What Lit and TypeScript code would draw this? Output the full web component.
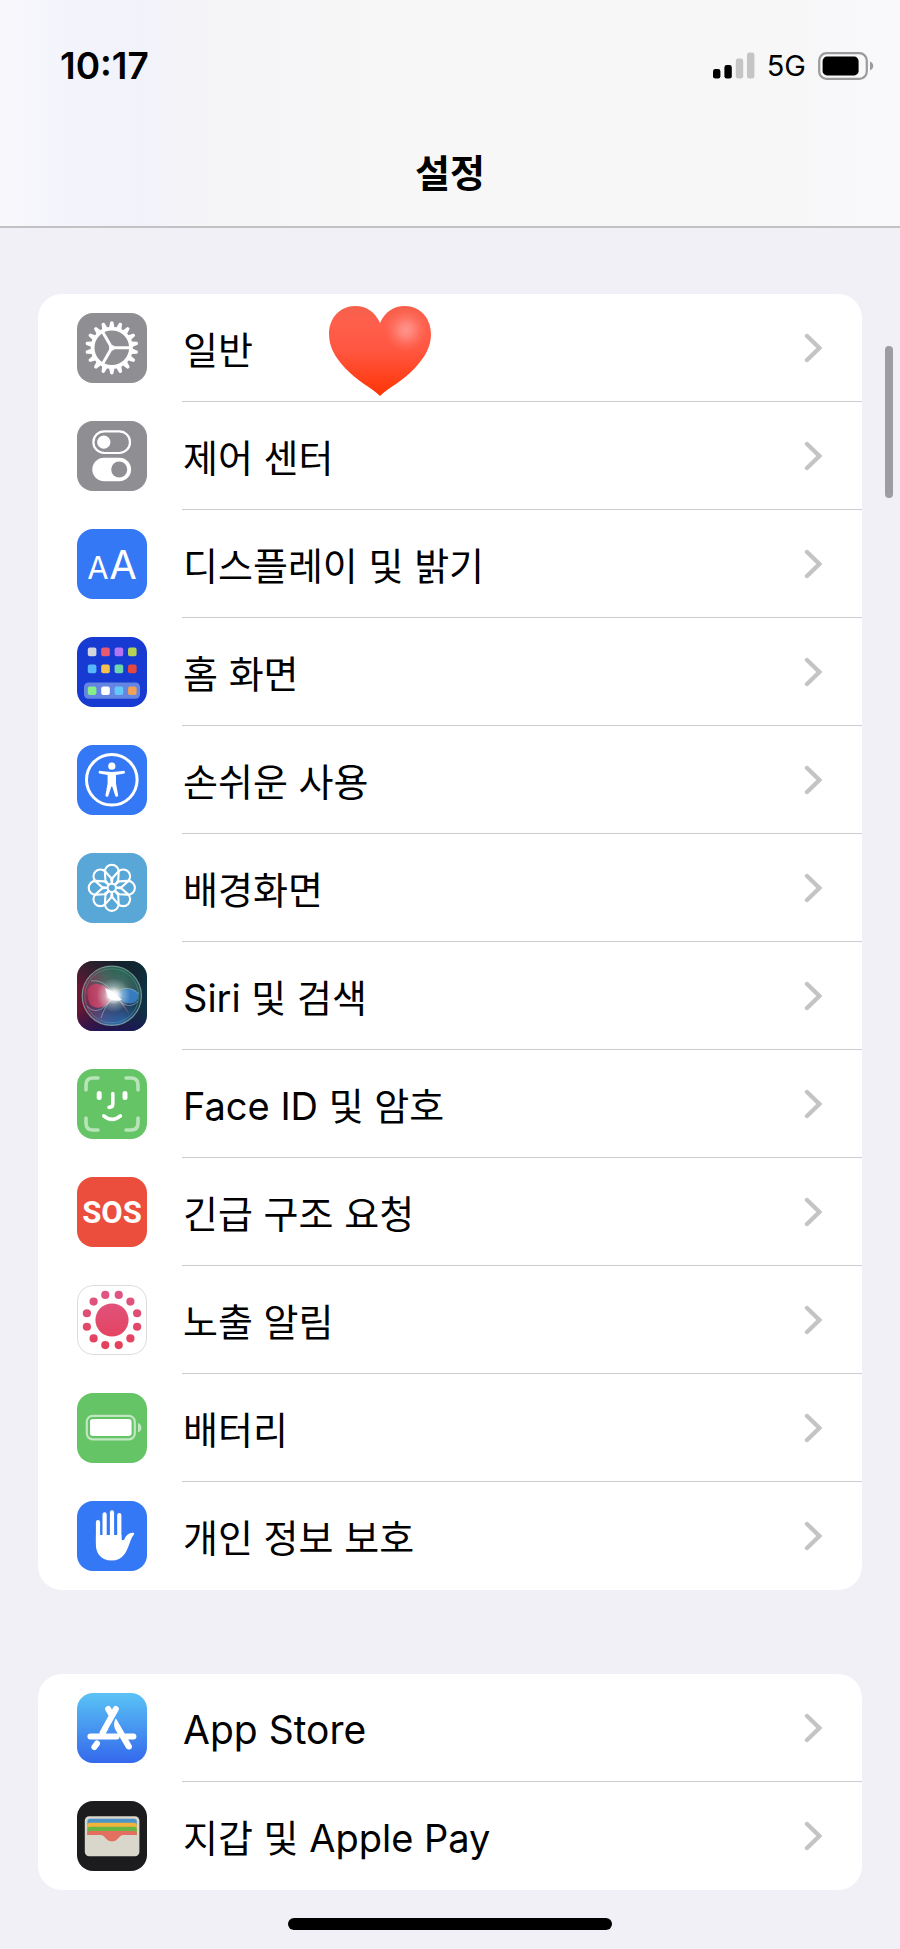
import { LitElement, html, svg, css, type SVGTemplateResult } from "lit";
import { customElement, property } from "lit/decorators.js";

const range = (n: number) => Array.from({ length: n }, (_, i) => i);

const gear = svg`
  <rect width="70" height="70" rx="16" fill="#8e8e93"/>
  <g transform="translate(34.8 34.8)">
    ${range(18).map(i => svg`<path transform="rotate(${i * 20})" d="M-2.8 -20 L-1.5 -26 Q0 -27.2 1.5 -26 L2.8 -20 Z" fill="#fff"/>`)}
    <circle r="19.2" fill="none" stroke="#fff" stroke-width="3.8"/>
    <path d="M0 0H18M0 0L-9 -15.6M0 0L-9 15.6" stroke="#fff" stroke-width="3"/>
    <circle r="2.8" fill="#fff"/>
  </g>`;

const control = svg`
  <rect width="70" height="70" rx="16" fill="#8e8e93"/>
  <rect x="16.4" y="10.4" width="36.6" height="21.6" rx="10.8" fill="none" stroke="#fff" stroke-width="2.2"/>
  <circle cx="26.8" cy="21.2" r="6.6" fill="#fff"/>
  <rect x="15.3" y="36.8" width="38.8" height="23.4" rx="11.7" fill="#fff"/>
  <circle cx="42.2" cy="48.5" r="8" fill="#8e8e93"/>`;

const display = svg`
  <rect width="70" height="70" rx="16" fill="#3478f6"/>
  <g fill="#fff" font-family="Inter, sans-serif" text-anchor="middle">
    <text x="21" y="50" font-size="31">A</text>
    <text x="46" y="50" font-size="40">A</text>
  </g>`;

const tileColors = [
  ["#d3d5dc", "#ea5a6e", "#b574f4", "#b5d255"],
  ["#56b8fa", "#f6c04d", "#6cd7aa", "#e5483d"],
  ["#85ee86", "#ffffff", "#62c8fa", "#f0a157"],
];
const home = svg`
  <rect width="70" height="70" rx="16" fill="#173bd2"/>
  <rect x="7" y="45.4" width="56" height="16.4" rx="4.5" fill="#6585e2"/>
  ${tileColors.map((row, r) => row.map((c, i) => svg`
    <rect x=${10.8 + i * 13.4} y=${[10.6, 27.6, 49.4][r]} width="8.6" height="8.6" rx="2" fill=${c}/>`))}`;

const access = svg`
  <rect width="70" height="70" rx="16" fill="#3478f6"/>
  <circle cx="34.8" cy="34.8" r="25.3" fill="none" stroke="#fff" stroke-width="3"/>
  <circle cx="34.8" cy="21.2" r="3.6" fill="#fff"/>
  <path d="M22.4 25.8Q34.8 28 47.2 25.8Q49 27.4 47.4 28.6L39 30V38.6L41.2 50.6Q40.2 52.6 38.4 51.2L35.2 41.6H34.4L31.2 51.2Q29.4 52.6 28.4 50.6L30.6 38.6V30L22.2 28.6Q20.6 27.4 22.4 25.8Z" fill="#fff"/>`;

const flower = svg`
  <rect width="70" height="70" rx="16" fill="#59a7d7"/>
  <g transform="translate(34.8 34.8)" fill="none" stroke="#fff" stroke-width="2.1" stroke-linejoin="round">
    <circle r="4.2"/>
    ${range(8).map(i => svg`<path transform="rotate(${i * 45})" d="M-3 -3L-6.4 -7.4L-6.9 -16.2A6.9 6.9 0 1 1 6.9 -16.2L6.4 -7.4L3 -3"/>`)}
  </g>`;

const siri = svg`
  <defs>
    <linearGradient id="sb" x1="0" y1=".4" x2="1" y2=".5">
      <stop offset="0" stop-color="#6d1733"/><stop offset=".5" stop-color="#2a1630"/><stop offset="1" stop-color="#0c3242"/>
    </linearGradient>
    <linearGradient id="so" x1="0" y1="0" x2="0" y2="1">
      <stop offset="0" stop-color="#256b55"/><stop offset=".4" stop-color="#557470"/><stop offset=".65" stop-color="#2c4066"/><stop offset="1" stop-color="#2f70c0"/>
    </linearGradient>
    <linearGradient id="sl" x1="0" y1="0" x2="1" y2="0">
      <stop offset="0" stop-color="#8a1f45" stop-opacity=".85"/><stop offset=".4" stop-color="#8a3355" stop-opacity=".2"/><stop offset=".7" stop-color="#10303a" stop-opacity=".1"/><stop offset="1" stop-color="#0d4650" stop-opacity=".7"/>
    </linearGradient>
    <linearGradient id="sr" x1="0" y1="0" x2="1" y2="0">
      <stop offset="0" stop-color="#b8365a"/><stop offset="1" stop-color="#e26a8e"/>
    </linearGradient>
    <linearGradient id="st" x1="0" y1="0" x2="0" y2="1">
      <stop offset="0" stop-color="#08292a" stop-opacity=".6"/><stop offset=".4" stop-color="#08292a" stop-opacity="0"/><stop offset=".7" stop-color="#1d1460" stop-opacity="0"/><stop offset="1" stop-color="#1d1460" stop-opacity=".7"/>
    </linearGradient>
    <radialGradient id="sw">
      <stop offset="0" stop-color="#fff"/><stop offset=".25" stop-color="#fff" stop-opacity=".9"/><stop offset=".55" stop-color="#dff4f0" stop-opacity=".4"/><stop offset="1" stop-color="#cfeeea" stop-opacity="0"/>
    </radialGradient>
  </defs>
  <rect width="70" height="70" rx="16" fill="url(#sb)"/>
  <rect width="70" height="70" rx="16" fill="url(#st)"/>
  <circle cx="34.8" cy="34.8" r="29.6" fill="url(#so)"/>
  <circle cx="34.8" cy="34.8" r="29.6" fill="url(#sl)" stroke="#86aaa5" stroke-opacity=".8" stroke-width="1.2"/>
  <circle cx="34.8" cy="34.8" r="27" fill="none" stroke="#5aa894" stroke-opacity=".45"/>
  <path d="M10.5 34C9 20 26 19 38 34C33 45 20 51 13 43Q11 39 10.5 34Z" fill="url(#sr)" fill-opacity=".9"/>
  <path d="M37 34.5C46 25 60 26 61.5 34.5C61.5 43 50 47 37 34.5Z" fill="#3b82d0" fill-opacity=".85"/>
  <path d="M39 36L53 54L45 41Z" fill="#c77d9b" fill-opacity=".6"/>
  <path d="M10 45C20 56 30 45 38 33C44 25 55 26 62 33M14 20C26 18 33 27 38 35C46 46 55 47 61 40M24 57Q28 44 37 36" fill="none" stroke="#a3d7e4" stroke-opacity=".5"/>
  <circle cx="36.6" cy="34.4" r="17" fill="url(#sw)"/>
  <path d="M28 27Q37 30 45 39Q38 41 31 37Z" fill="#fff" fill-opacity=".9"/>`;

const face = svg`
  <rect width="70" height="70" rx="16" fill="#65c466"/>
  <g fill="none" stroke="#fff" stroke-width="3.6" stroke-linecap="round">
    <path opacity=".55" d="M9 21V16Q9 9 16 9H21M49 9H54Q61 9 61 16V21M61 49V54Q61 61 54 61H49M21 61H16Q9 61 9 54V49"/>
    <path d="M35.8 24.6V35Q35.8 38.4 32 38.4M26.8 46.8Q35 54 43.4 46.8" stroke-width="3.6"/>
    <path d="M22.2 24.6V28.4M48 24.6V28.4" stroke-width="5"/>
  </g>`;

const sos = svg`
  <rect width="70" height="70" rx="16" fill="#eb4e3d"/>
  <text x="35" y="46" text-anchor="middle" font-family="Roboto, sans-serif" font-weight="700" font-size="31" fill="#fff">SOS</text>`;

const exposure = svg`
  <defs><linearGradient id="ex" gradientUnits="userSpaceOnUse" x1="0" y1="8" x2="0" y2="62">
    <stop offset="0" stop-color="#df5683"/><stop offset="1" stop-color="#e5405a"/>
  </linearGradient></defs>
  <rect x=".5" y=".5" width="69" height="69" rx="15.5" fill="#fff" stroke="#dcdcde"/>
  <g fill="url(#ex)">
    <circle cx="35" cy="35" r="16.6"/>
    ${range(12).map(i => {
      const a = (i * 30 + 15) * Math.PI / 180;
      return svg`<circle cx=${35 + 26 * Math.sin(a)} cy=${35 - 26 * Math.cos(a)} r="4.1"/>`;
    })}
  </g>`;

const battery = svg`
  <rect width="70" height="70" rx="16" fill="#65c466"/>
  <rect x="9.8" y="22.8" width="48" height="23.6" rx="6" fill="none" stroke="#fff" stroke-opacity=".6" stroke-width="2.2"/>
  <rect x="13" y="26" width="41.6" height="17" rx="3" fill="#fff"/>
  <path d="M61 30Q64.4 31.4 64.4 34.7Q64.4 38 61 39.4Z" fill="#fff" fill-opacity=".6"/>`;

const hand = svg`
  <rect width="70" height="70" rx="16" fill="#3478f6"/>
  <path d="M21 21V42M27.6 13.4V38M35 11.4V38M42.3 14V40" stroke="#fff" stroke-width="4.2" stroke-linecap="round"/>
  <path d="M18.9 34H44.4V38.6Q46 40 47.4 38.2C49 34.6 52 31.2 56.6 31.8Q57.8 32.4 56.8 33.8C53 38 52.4 46 48 52.4Q43 59.6 34.6 59.6C24 59.6 18.9 52 18.9 44Z" fill="#fff"/>`;

const store = svg`
  <defs><linearGradient id="as" x1="0" y1="0" x2="0" y2="1">
    <stop offset="0" stop-color="#5ac3f5"/><stop offset="1" stop-color="#3468ec"/>
  </linearGradient></defs>
  <rect width="70" height="70" rx="16" fill="url(#as)"/>
  <g fill="none" stroke="#fff" stroke-width="6" stroke-linecap="round">
    <path d="M31.2 16L34 21M38.8 16L25.6 39.6"/>
    <path d="M13.4 43.6H39.6M48.6 43.6H56.4M20 50.4L17.4 54"/>
  </g>
  <path d="M38.8 25.2C36 31 37 34 39.4 38.6L49.4 55.6C52 58 56 55.6 54.8 52.4Z" fill="#fff"/>
  <path d="M23.2 40.4H28.6L31.4 36L26 33Z" fill="#fff"/>`;

const wallet = svg`
  <rect width="70" height="70" rx="16" fill="#1c1c1e"/>
  <rect x="7.8" y="15.2" width="54.6" height="40" rx="4.4" fill="#d9d6cb"/>
  <path d="M10.4 34V20.6Q10.4 17.8 13.2 17.8H57Q59.8 17.8 59.8 20.6V34Z" fill="#4b95c8"/>
  <path d="M10.4 34V24.6Q10.4 21.8 13.2 21.8H57Q59.8 21.8 59.8 24.6V34Z" fill="#f2b33d"/>
  <path d="M10.4 34V28.6Q10.4 25.8 13.2 25.8H57Q59.8 25.8 59.8 28.6V34Z" fill="#68b543"/>
  <path d="M10.4 34V32.6Q10.4 30 13.2 30H57Q59.8 30 59.8 32.6V34H46C42 34 41.4 40.4 35 40.4S28 34 24 34Z" fill="#e26f5f"/>`;

interface Item { label: string; icon: SVGTemplateResult; heart?: boolean }

const groups: Item[][] = [
  [
    { label: "일반", icon: gear, heart: true },
    { label: "제어 센터", icon: control },
    { label: "디스플레이 및 밝기", icon: display },
    { label: "홈 화면", icon: home },
    { label: "손쉬운 사용", icon: access },
    { label: "배경화면", icon: flower },
    { label: "Siri 및 검색", icon: siri },
    { label: "Face ID 및 암호", icon: face },
    { label: "긴급 구조 요청", icon: sos },
    { label: "노출 알림", icon: exposure },
    { label: "배터리", icon: battery },
    { label: "개인 정보 보호", icon: hand },
  ],
  [
    { label: "App Store", icon: store },
    { label: "지갑 및 Apple Pay", icon: wallet },
  ],
];

const heartPath = "M52 91C44 83 29 76 17 63C6 51 1 41 1 29C1 13 12 1 27 1C39 1 47 7 52 18C57 7 65 1 77 1C92 1 103 13 103 29C103 41 98 51 87 63C75 76 60 83 52 91Z";

@customElement("settings-row")
class SettingsRow extends LitElement {
  @property({ attribute: false }) item!: Item;
  @property({ type: Boolean }) last = false;

  static styles = css`
    :host { display: block; }
    .row { display: flex; gap: 35px; padding-left: 39px; color: #000; text-decoration: none; }
    .icon { width: 70px; height: 70px; flex: none; margin-top: 19px; }
    .body { flex: 1; display: flex; align-items: center; height: 108px; box-sizing: border-box; padding-right: 40px; border-bottom: 1px solid #cdcdcf; }
    .body.last { border-bottom-color: transparent; }
    .label { padding: 4px 0 0 1px; font-size: 38px; line-height: 56px; white-space: nowrap; }
    .label.latin { font-size: 39px; }
    .heart { width: 104px; height: 92px; margin-left: 75px; padding-top: 6px; }
    .chevron { width: 18px; height: 30px; margin-left: auto; }
  `;

  render() {
    const { label, icon, heart } = this.item;
    const latin = /^[\x20-\x7e]+$/.test(label);
    return html`<a class="row" href="#">
      <svg class="icon" viewBox="0 0 70 70" aria-hidden="true">${icon}</svg>
      <span class="body ${this.last ? "last" : ""}">
        <span class="label ${latin ? "latin" : ""}">${label}</span>
        ${heart ? html`<svg class="heart" viewBox="0 0 104 92" role="img" aria-label="heart">
          <defs>
            <linearGradient id="hg" x1="0" y1="0" x2="0" y2="1">
              <stop offset="0" stop-color="#f5604a"/><stop offset=".2" stop-color="#ff5f4c"/><stop offset=".5" stop-color="#ff5640"/><stop offset="1" stop-color="#ff3405"/>
            </linearGradient>
            <radialGradient id="hl" gradientUnits="userSpaceOnUse" cx="78" cy="25" r="22">
              <stop offset="0" stop-color="#ff958b"/><stop offset=".3" stop-color="#ff8a80" stop-opacity=".9"/><stop offset="1" stop-color="#ff7060" stop-opacity="0"/>
            </radialGradient>
          </defs>
          <path d=${heartPath} fill="url(#hg)"/>
          <path d=${heartPath} fill="url(#hl)"/>
        </svg>` : ""}
        <svg class="chevron" viewBox="0 0 18 30" aria-hidden="true">
          <path d="M3 3L15.4 15L3 27" fill="none" stroke="#c4c4c6" stroke-width="4.4" stroke-linecap="round"/>
        </svg>
      </span>
    </a>`;
  }
}

@customElement("status-bar")
class StatusBar extends LitElement {
  static styles = css`
    :host { display: flex; align-items: center; justify-content: space-between; height: 44px; padding: 44px 26px 0 60px; }
    .time { font-size: 37px; font-weight: 600; line-height: 44px; }
    .right { display: flex; align-items: center; gap: 12px; }
    .net { font-size: 29px; line-height: 44px; }
    .signal { width: 42px; height: 28px; }
    .battery { width: 56px; height: 28px; }
  `;
  render() {
    return html`
      <time class="time">10:17</time>
      <div class="right">
        <svg class="signal" viewBox="0 0 42 28" role="img" aria-label="signal">
          <rect x="0" y="17" width="7.4" height="9.6" rx="2.4"/>
          <rect x="11.4" y="13" width="7.4" height="13.6" rx="2.4"/>
          <rect x="22.8" y="6.6" width="7.4" height="20" rx="2.4" fill="#c5c5c6"/>
          <rect x="34" y="0.4" width="7.4" height="26.2" rx="2.4" fill="#c5c5c6"/>
        </svg>
        <span class="net">5G</span>
        <svg class="battery" viewBox="0 0 56 28" role="img" aria-label="battery">
          <rect x="1.2" y="1.2" width="47.6" height="25.6" rx="7.4" fill="none" stroke="#9b9b9c" stroke-width="2.2"/>
          <rect x="4.6" y="4.6" width="36" height="18.8" rx="4.4"/>
          <path d="M52 9.6Q55.2 11 55.2 14Q55.2 17 52 18.4Z" fill="#9b9b9c"/>
        </svg>
      </div>`;
  }
}

@customElement("app-root")
class AppRoot extends LitElement {
  static styles = css`
    :host {
      display: block; position: relative; min-height: 100vh; background: #f1f0f6; color: #000;
      font-family: Inter, "Noto Sans CJK KR", sans-serif; font-size: 38px;
    }
    .top {
      border-bottom: 2px solid #c2c2c5;
      background: linear-gradient(90deg, #f8f8fc 0, #f2f3fb 90px, #f2f2fa 140px, #f5f5f8 210px, #f7f7f7 400px, #f7f7f8 780px, #f9f9fc 100%);
    }
    .title { margin: 0; padding: 57px 0 25px; font-size: 38px; font-weight: 700; line-height: 56px; text-align: center; }
    .lists { display: flex; flex-direction: column; gap: 84px; padding: 66px 38px 28px; }
    .card { margin: 0; padding: 0; list-style: none; background: #fff; border-radius: 24px; overflow: hidden; }
    .home { width: 36%; height: 12px; margin: 0 auto; border-radius: 6px; background: #000; }
    .scroll { position: absolute; right: 7px; top: 346px; width: 8px; height: 152px; border-radius: 4px; background: #9d9ca2; }
  `;
  render() {
    return html`
      <header class="top">
        <status-bar></status-bar>
        <h1 class="title">설정</h1>
      </header>
      <main class="lists">
        ${groups.map(g => html`<ul class="card">
          ${g.map((item, i) => html`<li><settings-row .item=${item} ?last=${i === g.length - 1}></settings-row></li>`)}
        </ul>`)}
      </main>
      <div class="home"></div>
      <div class="scroll"></div>`;
  }
}
